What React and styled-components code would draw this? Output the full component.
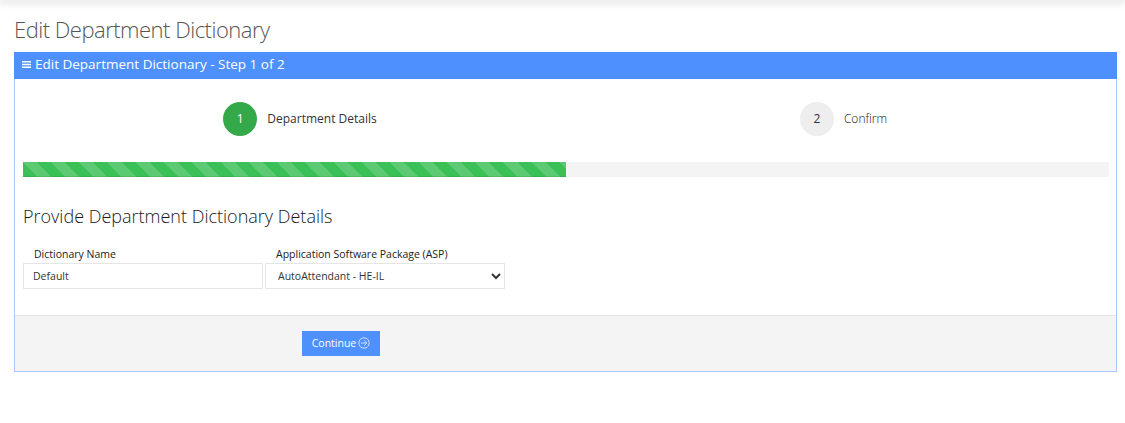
import React from "react";
import styled, { createGlobalStyle } from "styled-components";

const GlobalStyle = createGlobalStyle`
  html, body {
    margin: 0;
    padding: 0;
    background: #fff;
    font-family: "Open Sans", "Liberation Sans", sans-serif;
    color: #333;
  }
`;

const TopBar = styled.div`
  height: 0;
  box-shadow: 0 0 8px 2px rgba(0, 0, 0, 0.18);
`;

const Page = styled.main`
  padding: 16px 8px 0 14px;
`;

const Title = styled.h1`
  margin: 0 0 9px;
  height: 27px;
  font-size: 22px;
  line-height: 27px;
  font-weight: 300;
  letter-spacing: -0.5px;
  color: #555;
`;

const Panel = styled.section`
  width: 1103px;
  box-sizing: border-box;
  border: 1px solid #a8c8fb;
  border-top: 0;
`;

const PanelHeader = styled.header`
  height: 27px;
  margin: 0 -1px;
  padding: 0 0 3px 8px;
  box-sizing: border-box;
  display: flex;
  align-items: center;
  gap: 4px;
  background: #4d90fe;
  color: #fff;
  font-size: 13.5px;
  font-weight: 400;
`;

const Body = styled.div`
  padding: 23px 7px 26px 8px;
`;

const Steps = styled.div`
  display: grid;
  grid-template-columns: 1fr 1fr;
`;

const Step = styled.div`
  display: flex;
  align-items: center;
  justify-content: center;
  gap: 10px;
  padding-left: ${(p) => p.$inset}px;
  font-size: 12px;
  line-height: 32px;
  color: #333;
`;

const StepLabel = styled.span`
  font-weight: ${(p) => (p.$active ? 400 : 300)};
  color: ${(p) => (p.$active ? "#333" : "#111")};
  margin-top: -1px;
`;

const StepCircle = styled.span`
  width: 34px;
  height: 34px;
  border-radius: 50%;
  display: flex;
  align-items: center;
  justify-content: center;
  background: ${(p) => (p.$active ? "#34a94a" : "#eee")};
  color: ${(p) => (p.$active ? "#fff" : "#333")};
`;

const Progress = styled.div`
  height: 15px;
  margin-top: 26px;
  background: #f4f4f4;
`;

const ProgressFill = styled.div`
  height: 100%;
  background-color: #3bbf57;
  background-image: repeating-linear-gradient(
    45deg,
    transparent 0 10px,
    rgba(255, 255, 255, 0.17) 10px 20px
  );
  box-shadow: inset 0 -1px 0 rgba(0, 0, 0, 0.08);
`;

const Heading = styled.h2`
  margin: 27px 0 0;
  font-size: 18px;
  line-height: 24px;
  font-weight: 300;
  color: #1a1a1a;
`;

const Fields = styled.div`
  display: flex;
  gap: 2px;
  margin-top: 16px;
`;

const Field = styled.div`
  width: 240px;
  display: flex;
  flex-direction: column;
`;

const Label = styled.label`
  height: 19px;
  padding-left: 11px;
  font-size: 10.5px;
  line-height: 21px;
  color: #222;
`;

const TextInput = styled.input`
  box-sizing: border-box;
  height: 26px;
  padding: 0 9px;
  border: 1px solid #e5e5e5;
  border-radius: 0;
  outline: none;
  font-family: inherit;
  font-size: 10.5px;
  color: #333;
`;

const Select = styled.select`
  box-sizing: border-box;
  height: 26px;
  padding: 0 8px;
  border: 1px solid #e5e5e5;
  border-radius: 0;
  background: #fff;
  font-family: inherit;
  font-size: 10.5px;
  color: #333;
`;

const Footer = styled.footer`
  height: 56px;
  box-sizing: border-box;
  padding: 15px 0 0 287px;
  border-top: 1px solid #e5e5e5;
  background: #f4f4f4;
`;

const Button = styled.button`
  width: 78px;
  height: 25px;
  padding: 0 0 2px;
  border: 0;
  display: flex;
  align-items: center;
  justify-content: center;
  gap: 2px;
  background: #4d90fe;
  color: #fff;
  font-family: inherit;
  font-size: 10.5px;
`;

function MenuIcon() {
  return (
    <svg width="9" height="7" viewBox="0 0 9 7" aria-hidden="true">
      <path d="M0 .7h9M0 3.5h9M0 6.3h9" stroke="#fff" strokeWidth="1.4" />
    </svg>
  );
}

function ArrowCircleIcon() {
  return (
    <svg width="12" height="12" viewBox="0 0 12 12" fill="none" aria-hidden="true">
      <circle cx="6" cy="6" r="5.2" stroke="#cfe0ff" strokeWidth="1" />
      <path d="M2.8 6h6M6.2 3.4 8.8 6 6.2 8.6" stroke="#cfe0ff" strokeWidth="1" />
    </svg>
  );
}

function App() {
  return (
    <>
      <GlobalStyle />
      <TopBar />
      <Page>
        <Title>Edit Department Dictionary</Title>
        <Panel>
          <PanelHeader>
            <MenuIcon />
            Edit Department Dictionary - Step 1 of 2
          </PanelHeader>
          <Body>
            <Steps>
              <Step $inset={11}>
                <StepCircle $active>1</StepCircle>
                <StepLabel $active>Department Details</StepLabel>
              </Step>
              <Step $inset={12}>
                <StepCircle>2</StepCircle>
                <StepLabel>Confirm</StepLabel>
              </Step>
            </Steps>
            <Progress>
              <ProgressFill style={{ width: "50%" }} />
            </Progress>
            <Heading>Provide Department Dictionary Details</Heading>
            <Fields>
              <Field>
                <Label>Dictionary Name</Label>
                <TextInput defaultValue="Default" />
              </Field>
              <Field>
                <Label>Application Software Package (ASP)</Label>
                <Select defaultValue="AutoAttendant - HE-IL">
                  <option>AutoAttendant - HE-IL</option>
                </Select>
              </Field>
            </Fields>
          </Body>
          <Footer>
            <Button>
              Continue
              <ArrowCircleIcon />
            </Button>
          </Footer>
        </Panel>
      </Page>
    </>
  );
}

export default App;
